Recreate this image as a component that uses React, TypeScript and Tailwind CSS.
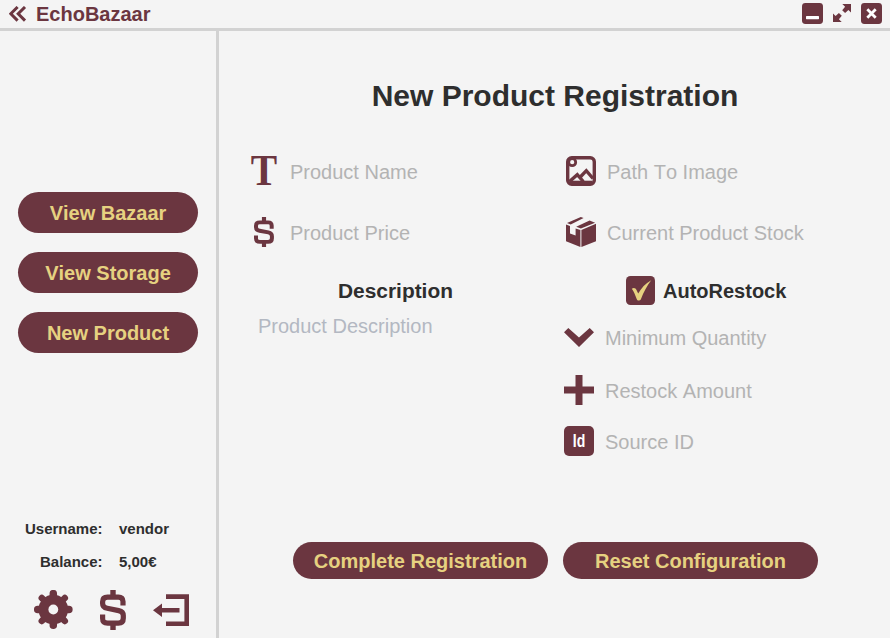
import React from "react";

type IconProps = { className?: string };

const BackIcon = () => (
  <svg width="18" height="16" viewBox="0 0 18 16" fill="none" stroke="#6b3640" strokeWidth="3">
    <path d="M8.600 1 1.800 7.800l6.800 6.800M16 1 9.200 7.800l6.800 6.800" />
  </svg>
);

const MinimizeIcon = () => (
  <svg width="21" height="21" viewBox="0 0 21 21">
    <rect width="21" height="21" rx="3.400" fill="#6b3640" />
    <rect x="4" y="13" width="13" height="3.200" rx=".6" fill="#fff" />
  </svg>
);

const ExpandIcon = () => (
  <svg width="18" height="18" viewBox="0 0 18 18" fill="#6b3640">
    <path d="M9.300 0H18v8.600l-2.600-2.500-3.300 3L9.200 6.200l2.900-3.400zM0 18V9.400l2.600 2.500 3.300-3 2.900 2.900-2.900 3.400L8.700 18z" />
  </svg>
);

const CloseIcon = () => (
  <svg width="21" height="21" viewBox="0 0 21 21">
    <rect width="21" height="21" rx="3.400" fill="#6b3640" />
    <path d="m6.300 6.300 8.400 8.400m0-8.400-8.400 8.400" stroke="#fff" strokeWidth="2.800" />
  </svg>
);

const DollarIcon = ({ className }: IconProps) => (
  <svg className={className} viewBox="0 0 26 40" preserveAspectRatio="none" fill="none" stroke="#6b3640">
    <path
      strokeWidth="5.200"
      strokeLinejoin="round"
      d="M23 15.500V11.500c0-3-1.500-4.300-4.500-4.300H7.500c-3.400 0-4.900 1.500-4.900 4.500v1.800c0 3 1.500 4.300 4.600 4.800l11.500 2.300c3.200.7 4.600 2 4.600 4.900v2.700c0 3.400-1.500 4.900-5 4.900H7.700c-3.600 0-5.100-1.500-5.100-4.900V24.500"
    />
    <path strokeWidth="5.400" d="M13 0v7M13 33v7" />
  </svg>
);

const GearIcon = () => (
  <svg width="40" height="40" viewBox="0 0 40 40">
    <g stroke="#6b3640" strokeWidth="7.500" strokeLinecap="round">
      <path d="M20.300 3.700v31.600M4.700 19.500h31.200" />
      <path strokeWidth="6.500" d="m8.800 8 23 23M31.800 8l-23 23" />
    </g>
    <circle cx="20.300" cy="19.500" r="14.800" fill="#6b3640" />
    <circle cx="20.300" cy="19.500" r="4.900" fill="#f4f4f4" />
  </svg>
);

const LogoutIcon = () => (
  <svg width="36" height="33" viewBox="0 0 36 33">
    <path d="M13 2.600h20.700v27.200H13" fill="none" stroke="#6b3640" strokeWidth="4.600" />
    <path d="M0 16.200 9 9.400V14h17.500v4.400H9V23z" fill="#6b3640" />
  </svg>
);

const ImageIcon = () => (
  <svg width="30" height="30" viewBox="0 0 30 30" fill="none" stroke="#6b3640">
    <rect x="1.700" y="1.700" width="26.600" height="26.600" rx="4" strokeWidth="3.400" />
    <circle cx="6.200" cy="6.200" r="3.500" strokeWidth="2.800" />
    <path d="m3.500 25.500 7.800-6.800 6 6.800M14.300 21l6-6.300 6.700 7.800" strokeWidth="3.400" />
    <path d="M3.500 26.700h23" strokeWidth="4" />
  </svg>
);

const BoxIcon = () => (
  <svg width="30" height="30" viewBox="0 0 30 30" fill="#6b3640">
    <path d="M0 7.600 4 9v7.400l5.600 2.100v-7l4.800 1.500V30L0 24.300zM15.400 13 30 6.800v17.500L15.400 30zM1 6.100 14.800 0l2.800 1L4.700 7.400zM10.200 9.800 23.600 3.500l5.500 2.200-14.200 5.900z" />
  </svg>
);

const CheckIcon = () => (
  <svg width="29" height="29" viewBox="0 0 29 29">
    <rect width="29" height="29" rx="4.500" fill="#6b3640" />
    <path
      d="M5.800 12.700c2.200-1.400 4-.4 4.700 1.300l1.700 3.500C15.300 12.300 19.300 7.500 25.200 4.300c-4.200 5.600-7.700 12-10.300 18.900-1.700 2.200-3.500 1.500-4.200-.2C9.200 19.600 8 15.200 5.800 12.700z"
      fill="#e6d180"
    />
  </svg>
);

const ChevronIcon = () => (
  <svg width="30" height="19" viewBox="0 0 30 19" fill="#6b3640">
    <path d="M4.300 0 15 9.600 25.700 0 30 4.200 15 19 0 4.200z" />
  </svg>
);

const PlusIcon = () => (
  <svg width="30" height="30" viewBox="0 0 30 30" fill="#6b3640">
    <path d="M11.500 0h7v11.500H30v7H18.500V30h-7V18.500H0v-7h11.500z" />
  </svg>
);

const IdIcon = () => (
  <span className="flex size-[30px] items-center justify-center rounded-[5px] bg-[#6b3640]">
    <span className="scale-x-[.78] pb-px text-[18px] leading-none font-bold text-white">Id</span>
  </span>
);

const LetterIcon = () => (
  <span className="-mt-[3px] scale-x-[.88] font-['Liberation_Serif',serif] text-[45px] leading-[30px] font-bold text-[#6b3640]">
    T
  </span>
);

function Field({ icon, label, className }: { icon: React.ReactNode; label: React.ReactNode; className: string }) {
  return (
    <div className={`flex items-center ${className}`}>
      <div className="flex w-[30px] shrink-0 justify-center">{icon}</div>
      <span>{label}</span>
    </div>
  );
}

const pill = "flex items-center justify-center rounded-full bg-[#6b3640] font-bold text-[#e6d180]";

export default function App() {
  return (
    <div className="flex h-[638px] w-[890px] flex-col overflow-hidden bg-[#f4f4f4] font-['Liberation_Sans',Arial,sans-serif] text-[20px] leading-6 text-[#2e2e2e] [font-kerning:none]">
      <header className="flex h-[31px] shrink-0 items-center border-b-[3px] border-[#d2d2d2] pr-2 pl-[9px]">
        <BackIcon />
        <span className="ml-[9px] font-bold text-[#6b3640]">EchoBazaar</span>
        <div className="ml-auto flex items-center gap-[10px] pb-px">
          <MinimizeIcon />
          <div className="pb-[2px]"><ExpandIcon /></div>
          <CloseIcon />
        </div>
      </header>
      <div className="flex flex-1">
        <aside className="flex w-[219px] shrink-0 flex-col border-r-[3px] border-[#d2d2d2]">
          <nav className="mt-[161px] ml-[18px] flex flex-col gap-[19px]">
            {["View Bazaar", "View Storage", "New Product"].map((label) => (
              <button key={label} className={`h-[41px] w-[180px] ${pill}`}>{label}</button>
            ))}
          </nav>
          <dl className="mt-[164px] grid grid-cols-[102.500px_1fr] gap-x-[16.500px] gap-y-[9px] text-[15px] font-bold">
            <dt className="text-right">Username:</dt>
            <dd>vendor</dd>
            <dt className="text-right">Balance:</dt>
            <dd>5,00€</dd>
          </dl>
          <div className="mt-[16px] flex items-center pl-[33px]">
            <GearIcon />
            <DollarIcon className="ml-[27px] h-10 w-[26px]" />
            <div className="ml-[27px]"><LogoutIcon /></div>
          </div>
        </aside>
        <main className="flex flex-1 flex-col">
          <h1 className="mt-[47px] pl-px text-center text-[30px] leading-9 font-bold">New Product Registration</h1>
          <div className="mt-[27px] flex h-[325px] text-[#b3b3b3]">
            <section className="w-[345px] pl-[30px]">
              <Field icon={<LetterIcon />} label="Product Name" className="h-[61px] gap-[11px]" />
              <Field icon={<DollarIcon className="mb-px h-[30px] w-[20px]" />} label="Product Price" className="h-[61px] gap-[11px]" />
              <h2 className="mt-[16px] pl-[89px] text-[20.900px] font-bold text-[#2e2e2e]">Description</h2>
              <p className="mt-[11px] pl-[9px] text-[#b3b8c2]">Product Description</p>
            </section>
            <section>
              <Field icon={<div className="mb-[2px]"><ImageIcon /></div>} label="Path To Image" className="ml-[2px] h-[61px] gap-[11px]" />
              <Field icon={<div className="mb-[2px]"><BoxIcon /></div>} label="Current Product Stock" className="ml-[2px] h-[61px] gap-[11px]" />
              <div className="ml-[62px] flex h-[54px] items-center gap-2 font-bold text-[#2e2e2e]">
                <CheckIcon />
                <span className="pt-px">AutoRestock</span>
              </div>
              <Field icon={<ChevronIcon />} label="Minimum Quantity" className="mt-[-5px] h-[51px] gap-[11px]" />
              <Field icon={<PlusIcon />} label={<span className="relative top-px">Restock Amount</span>} className="h-[53px] gap-[11px]" />
              <Field icon={<IdIcon />} label={<span className="relative top-px">Source ID</span>} className="h-[50px] gap-[11px]" />
            </section>
          </div>
          <div className="mt-[76px] flex gap-[15px] pl-[74px]">
            <button className={`h-[37px] w-[255px] ${pill}`}>Complete Registration</button>
            <button className={`h-[37px] w-[255px] ${pill}`}>Reset Configuration</button>
          </div>
        </main>
      </div>
    </div>
  );
}
